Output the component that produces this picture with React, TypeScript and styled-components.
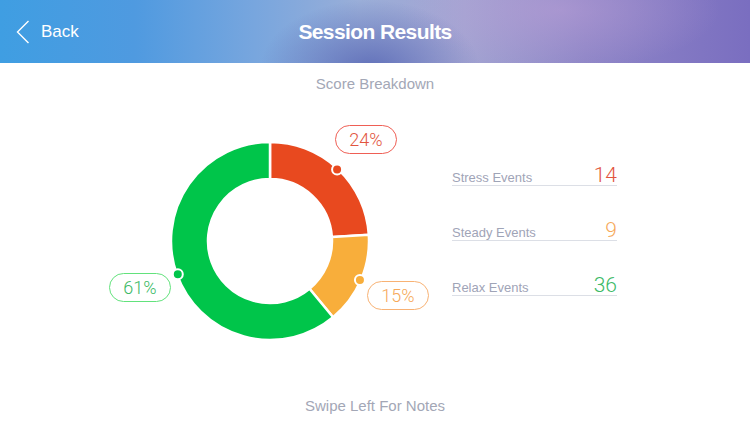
import styled, {createGlobalStyle} from "styled-components";

const GlobalStyle = createGlobalStyle`
  html, body {
    margin: 0;
    padding: 0;
    background: #ffffff;
  }
  body {
    font-family: "Liberation Sans", Arial, sans-serif;
  }
`;

type Segment = {
    label: string,
    value: number,
    percent: number,
    color: string,
    border: string,
    text: string,
    pill: { left: number, top: number }
};

const segments: Segment[] = [
    {label: "Stress Events", value: 14, percent: 24, color: "#e8491f", border: "#ef5f55", text: "#e2553e", pill: {left: 230, top: 0}},
    {label: "Steady Events", value: 9, percent: 15, color: "#f8ae3b", border: "#f8b274", text: "#f6a95a", pill: {left: 262, top: 156}},
    {label: "Relax Events", value: 36, percent: 61, color: "#00c54a", border: "#62e27c", text: "#3cba66", pill: {left: 4, top: 148}},
];

const CX = 165;
const CY = 116;
const R_OUT = 99;
const R_IN = 62;

function polar(angle: number, r: number) {
    const a = (angle * Math.PI) / 180;
    return [CX + r * Math.sin(a), CY - r * Math.cos(a)];
}

function arcPath(start: number, end: number) {
    const [x1, y1] = polar(start, R_OUT);
    const [x2, y2] = polar(end, R_OUT);
    const [x3, y3] = polar(end, R_IN);
    const [x4, y4] = polar(start, R_IN);
    const large = end - start > 180 ? 1 : 0;
    return `M${x1} ${y1} A${R_OUT} ${R_OUT} 0 ${large} 1 ${x2} ${y2} L${x3} ${y3} A${R_IN} ${R_IN} 0 ${large} 0 ${x4} ${y4} Z`;
}

function Donut() {
    let angle = 0;
    const arcs = segments.map((s) => {
        const start = angle;
        const end = angle + (s.percent / 100) * 360;
        angle = end;
        return {...s, start, end, mid: (start + end) / 2};
    });
    return (
        <ChartSvg width="330" height="220" viewBox="0 0 330 220">
            {arcs.map((a) => (
                <path key={a.label} d={arcPath(a.start, a.end)} fill={a.color} stroke="#fff" strokeWidth="2.5"/>
            ))}
            {arcs.map((a) => {
                const [x, y] = polar(a.mid, 98);
                return <circle key={a.label + "dot"} cx={x} cy={y} r="5" fill={a.color} stroke="#fff" strokeWidth="2"/>;
            })}
        </ChartSvg>
    );
}

function App() {
    return (
        <Page>
            <GlobalStyle/>
            <Header>
                <BackButton>
                    <svg width="14" height="24" viewBox="0 0 14 24">
                        <path d="M12.5 1 L1.5 12 L12.5 23" fill="none" stroke="#fff" strokeWidth="1.4"/>
                    </svg>
                    <span>Back</span>
                </BackButton>
                <Title>Session Results</Title>
            </Header>

            <Subtitle>Score Breakdown</Subtitle>

            <Main>
                <Chart>
                    <Donut/>
                    {segments.map((s) => (
                        <Pill key={s.label} $border={s.border} $color={s.text} style={{left: s.pill.left, top: s.pill.top}}>
                            {s.percent}%
                        </Pill>
                    ))}
                </Chart>
                <Stats>
                    {segments.map((s) => (
                        <StatRow key={s.label}>
                            <StatLabel>{s.label}</StatLabel>
                            <StatValue $color={s.text}>{s.value}</StatValue>
                        </StatRow>
                    ))}
                </Stats>
            </Main>

            <Footer>Swipe Left For Notes</Footer>
        </Page>
    );
}

export default App;

const Page = styled.div`
  width: 750px;
  height: 422px;
  display: flex;
  flex-direction: column;
  overflow: hidden;
  background: #fff;
`;

const Header = styled.header`
  position: relative;
  height: 63px;
  flex-shrink: 0;
  display: flex;
  align-items: center;
  justify-content: center;
  background: radial-gradient(ellipse 110px 70px at 370px 70px, rgba(78, 92, 175, 0.75), rgba(78, 92, 175, 0) 100%),
  radial-gradient(ellipse 160px 60px at 560px 10px, rgba(190, 160, 215, 0.5), rgba(190, 160, 215, 0) 100%),
  linear-gradient(90deg, #3f9ee2 0%, #4f9ae0 18%, #78a6de 34%, #9aaed8 48%, #a3a4d2 62%, #8e86c7 78%, #7a6ec0 100%);
`;

const BackButton = styled.div`
  position: absolute;
  left: 16px;
  top: 20px;
  display: flex;
  align-items: center;
  gap: 11px;
  color: #fff;
  font-size: 17px;
  line-height: 24px;
`;

const Title = styled.h1`
  margin: 0;
  color: #fff;
  font-size: 21px;
  font-weight: 700;
  letter-spacing: -0.6px;
  line-height: 24px;
`;

const Subtitle = styled.div`
  margin-top: 12px;
  text-align: center;
  font-size: 15px;
  line-height: 17px;
  color: #a3a7b6;
`;

const Main = styled.main`
  display: flex;
  align-items: flex-start;
  gap: 17px;
  margin-top: 33px;
  padding-left: 105px;
`;

const Chart = styled.div`
  position: relative;
  width: 330px;
  height: 220px;
`;

const ChartSvg = styled.svg`
  display: block;
`;

const Pill = styled.div<{ $border: string, $color: string }>`
  position: absolute;
  box-sizing: border-box;
  width: 62px;
  height: 29px;
  border: 1.5px solid ${({$border}) => $border};
  border-radius: 15px;
  background: #fff;
  display: flex;
  align-items: center;
  justify-content: center;
  color: ${({$color}) => $color};
  font-family: Roboto, "Liberation Sans", sans-serif;
  font-weight: 300;
  font-size: 18px;
`;

const Stats = styled.div`
  width: 165px;
  margin-top: 42px;
  display: flex;
  flex-direction: column;
  gap: 36px;
`;

const StatRow = styled.div`
  display: flex;
  justify-content: space-between;
  align-items: baseline;
  height: 18px;
  border-bottom: 1px solid #dcdfe6;
`;

const StatLabel = styled.span`
  font-size: 13px;
  color: #9fa4b7;
`;

const StatValue = styled.span<{ $color: string }>`
  font-family: Roboto, "Liberation Sans", sans-serif;
  font-weight: 300;
  font-size: 21px;
  line-height: 16px;
  color: ${({$color}) => $color};
`;

const Footer = styled.div`
  margin-top: 52px;
  text-align: center;
  font-size: 15px;
  line-height: 17px;
  color: #a3a7b6;
`;
